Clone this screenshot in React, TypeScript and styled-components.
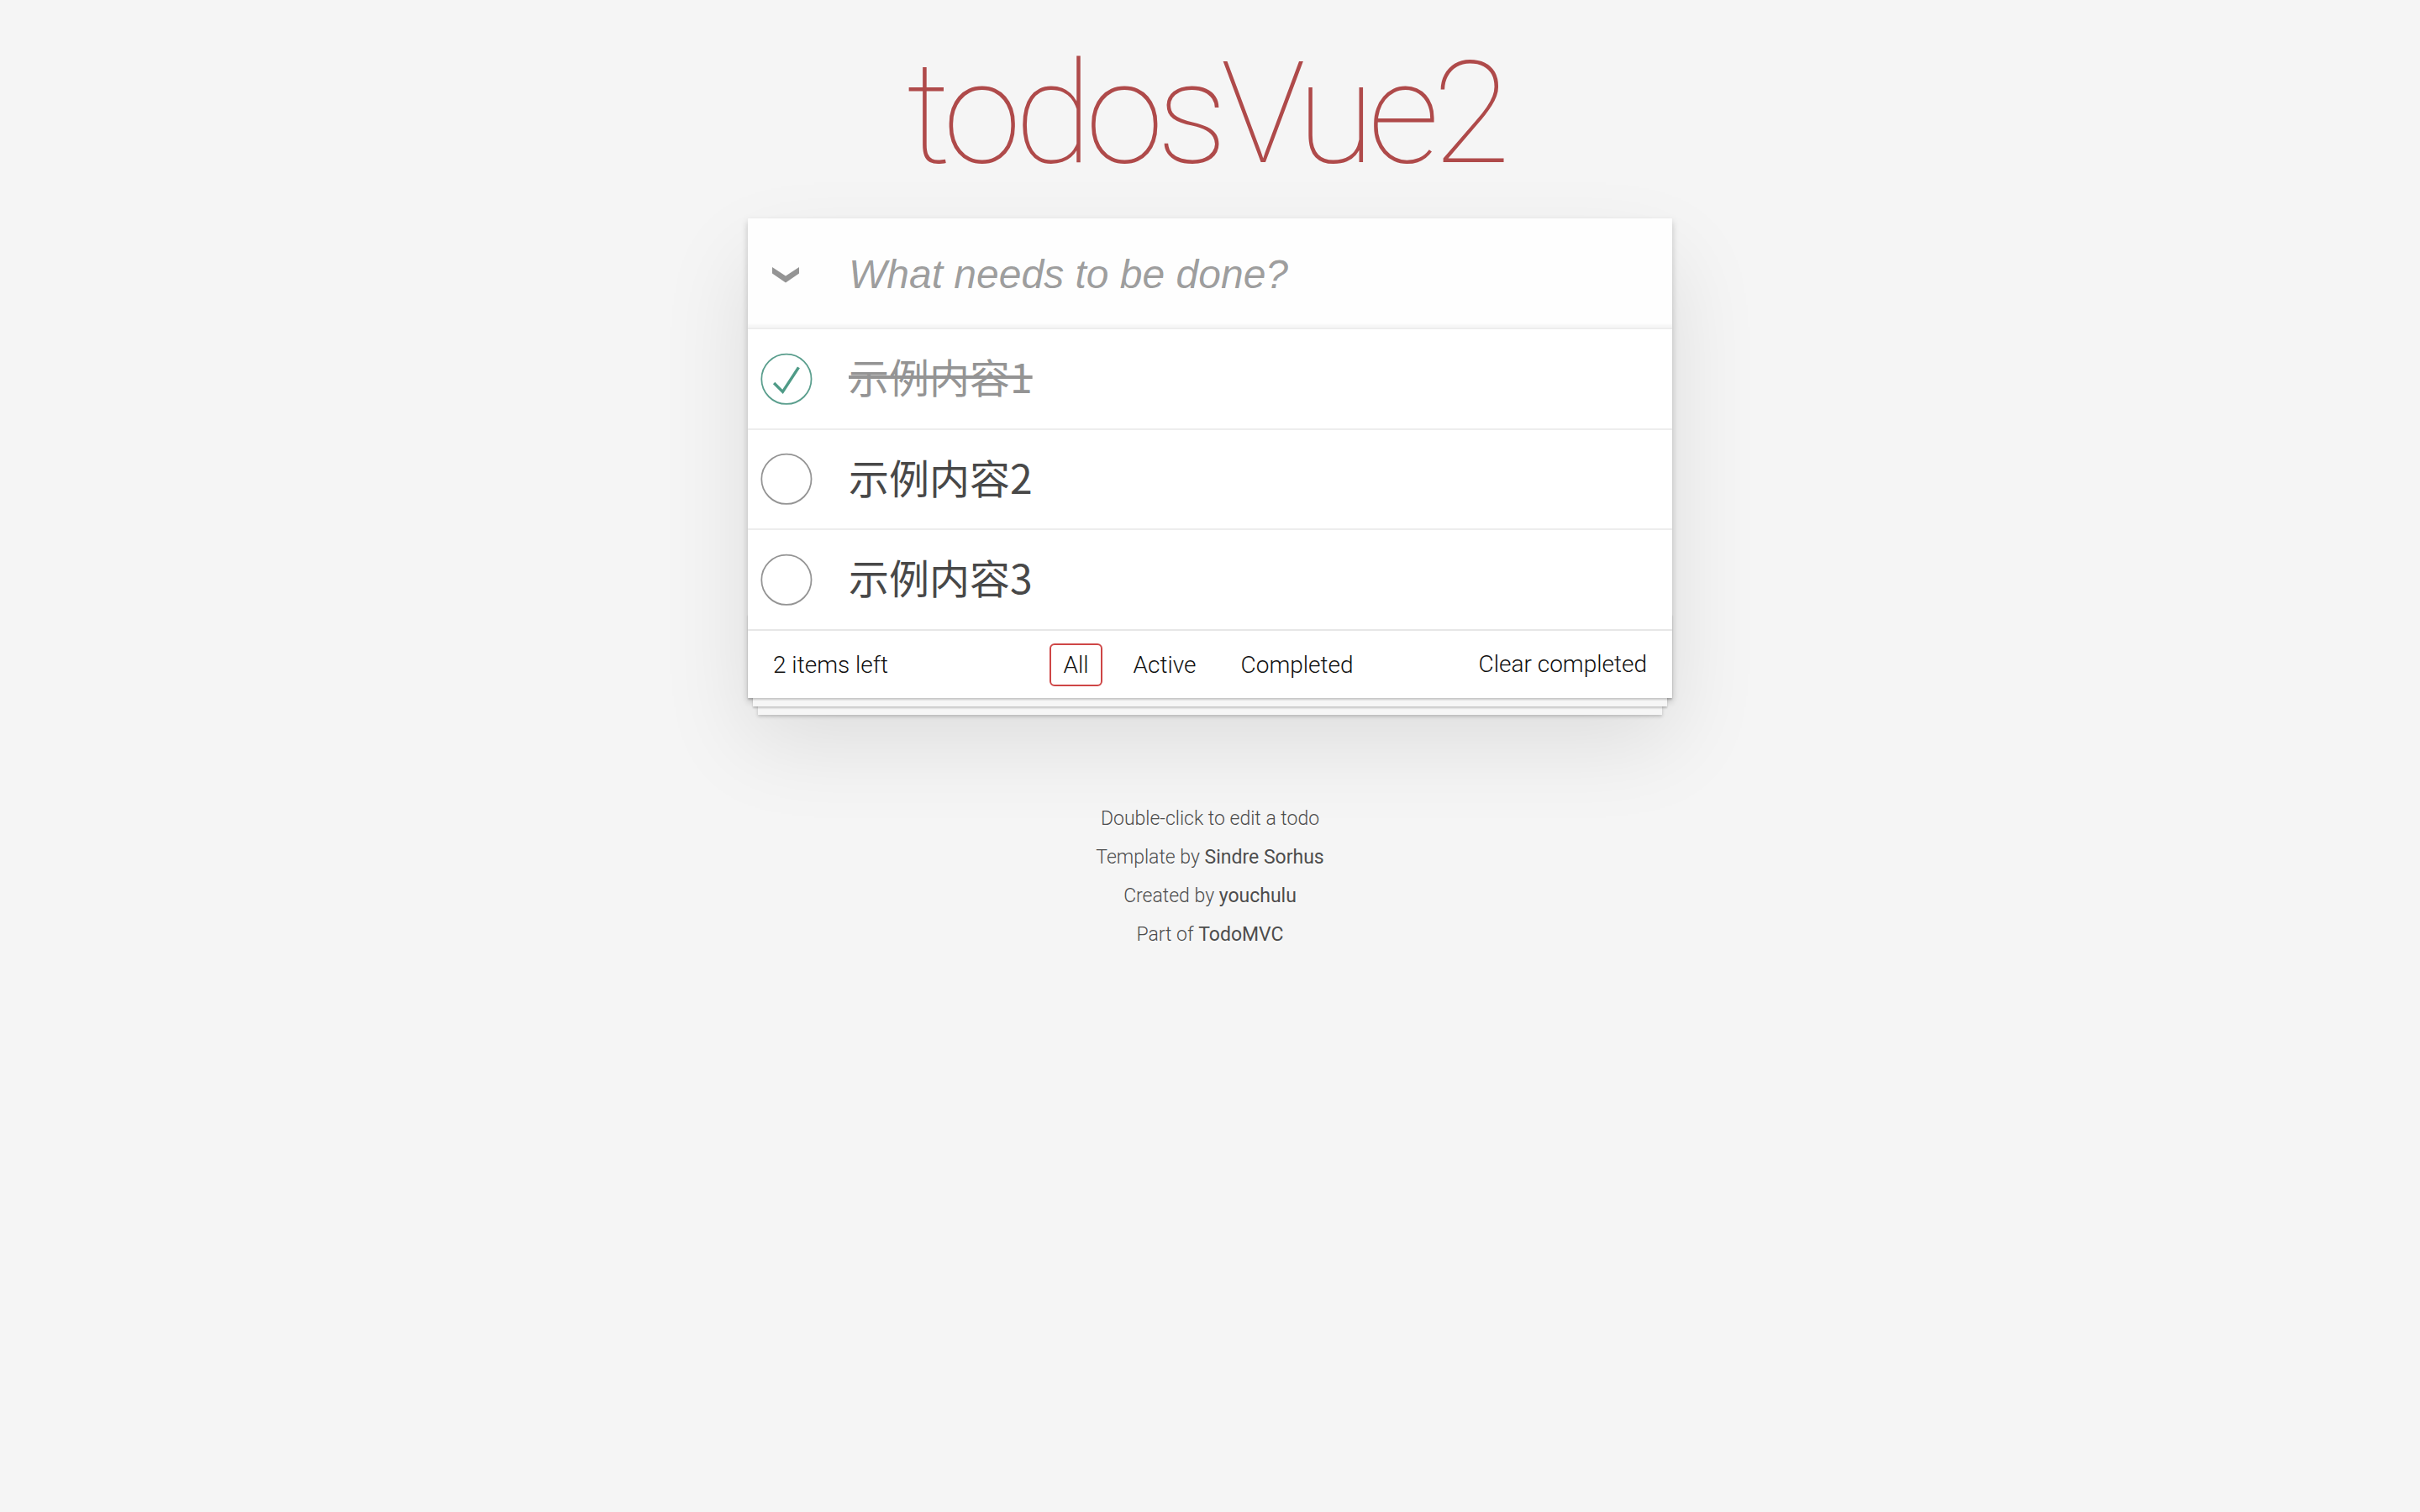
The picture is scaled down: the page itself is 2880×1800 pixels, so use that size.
import styled, { createGlobalStyle, css } from "styled-components";

const GlobalStyle = createGlobalStyle`
  html,
  body {
    margin: 0;
    padding: 0;
  }

  body {
    background: #f5f5f5;
    color: #111111;
    font-family: Roboto, "Noto Sans CJK SC", "Liberation Sans", sans-serif;
    font-weight: 300;
    -webkit-font-smoothing: antialiased;
  }
`;

const Page = styled.section`
  width: 1100px;
  margin: 0 auto;
`;

const Title = styled.h1`
  margin: 0 0 40px;
  padding: 51px 12px 0 0;
  font-size: 169px;
  line-height: 169px;
  font-weight: 100;
  letter-spacing: -8px;
  text-align: center;
  color: #af4a4a;
`;

const TodoApp = styled.div`
  position: relative;
  background: #fff;
  box-shadow: 0 4px 8px 0 rgba(0, 0, 0, 0.2), 0 50px 100px 0 rgba(0, 0, 0, 0.1);
`;

const Header = styled.header`
  display: flex;
  align-items: center;
  height: 130px;
  background: rgba(0, 0, 0, 0.003);
  box-shadow: inset 0 -4px 2px rgba(0, 0, 0, 0.03);
`;

const ToggleAll = styled.label`
  display: flex;
  align-items: center;
  justify-content: center;
  width: 90px;
  height: 130px;
  margin-top: 4px;
`;

const NewTodo = styled.input`
  flex: 1;
  height: 100%;
  border: none;
  outline: none;
  background: transparent;
  padding: 2px 32px 0 30px;
  font-family: "Liberation Sans", Arial, sans-serif;
  font-size: 48px;
  font-weight: 300;
  color: inherit;

  &::placeholder {
    font-style: italic;
    font-weight: 400;
    color: rgba(0, 0, 0, 0.4);
  }
`;

const TodoList = styled.ul`
  margin: 0;
  padding: 0;
  list-style: none;
`;

const TodoItem = styled.li`
  display: flex;
  align-items: center;
  border-top: 2px solid #ededed;
  font-size: 48px;
`;

const Toggle = styled.span`
  display: flex;
  width: 80px;
  height: 80px;
  flex: none;
`;

const TodoLabel = styled.label<{ $done?: boolean }>`
  flex: 1;
  padding: 27px 30px 33px 40px;
  line-height: 1.2;
  font-family: "Noto Sans CJK SC", Roboto, sans-serif;
  font-weight: 400;
  color: #484848;

  ${(p) =>
    p.$done &&
    css`
      color: #949494;
      text-decoration: line-through;
    `}
`;

const Footer = styled.footer`
  position: relative;
  display: grid;
  grid-template-columns: 1fr auto 1fr;
  align-items: center;
  height: 40px;
  padding: 15px 30px 25px;
  border-top: 2px solid #e6e6e6;
  font-size: 28px;
  line-height: 39px;

  &::before {
    content: "";
    position: absolute;
    right: 0;
    bottom: 0;
    left: 0;
    height: 100px;
    overflow: hidden;
    pointer-events: none;
    box-shadow: 0 2px 2px rgba(0, 0, 0, 0.2), 0 16px 0 -6px #f6f6f6,
      0 18px 2px -6px rgba(0, 0, 0, 0.2), 0 32px 0 -12px #f6f6f6,
      0 34px 4px -12px rgba(0, 0, 0, 0.2);
  }
`;

const Count = styled.span`
  justify-self: start;
`;

const Filters = styled.ul`
  display: flex;
  gap: 9px;
  margin: 0 4px 0 0;
  padding: 0;
  list-style: none;
`;

const FilterLink = styled.a<{ $selected?: boolean }>`
  display: block;
  margin: 0 6px;
  padding: 6px 14px;
  line-height: 35px;
  border: 2px solid ${(p) => (p.$selected ? "#ce4646" : "transparent")};
  border-radius: 6px;
  color: inherit;
  text-decoration: none;
`;

const ClearButton = styled.button`
  justify-self: end;
  margin: 0;
  padding: 0;
  border: none;
  background: none;
  font: inherit;
  color: inherit;
  line-height: 38px;
  cursor: pointer;
`;

const Info = styled.footer`
  margin-top: 132px;
  font-size: 23px;
  color: #4d4d4d;
  text-align: center;
  text-shadow: 0 2px 0 rgba(255, 255, 255, 0.5);

  p {
    margin: 22px 0;
    line-height: 24px;
  }

  p:first-child {
    margin-top: 0;
  }

  a {
    color: inherit;
    text-decoration: none;
    font-weight: 400;
  }
`;

const Chevron = () => (
  <svg width="32" height="20" viewBox="0 0 32 20">
    <polygon points="0,1 16,11.5 32,1 32,8.5 16,19.5 0,8.5" fill="#949494" />
  </svg>
);

const CheckCircle = ({ done }: { done: boolean }) => (
  <svg width="80" height="80" viewBox="-10 -18 100 135">
    <circle
      cx="50"
      cy="50"
      r="50"
      fill="none"
      stroke={done ? "#5a9e8d" : "#949494"}
      strokeWidth="3"
    />
    {done && <path fill="#4f9b87" d="M72 25L42 71 27 56l-4 4 20 20 34-52z" />}
  </svg>
);

const todos = [
  { title: "示例内容1", done: true },
  { title: "示例内容2", done: false },
  { title: "示例内容3", done: false },
];

export default function App() {
  const left = todos.filter((t) => !t.done).length;

  return (
    <>
      <GlobalStyle />
      <Page>
        <Title>todosVue2</Title>
        <TodoApp>
          <Header>
            <ToggleAll>
              <Chevron />
            </ToggleAll>
            <NewTodo placeholder="What needs to be done?" />
          </Header>
          <TodoList>
            {todos.map((todo) => (
              <TodoItem key={todo.title}>
                <Toggle>
                  <CheckCircle done={todo.done} />
                </Toggle>
                <TodoLabel $done={todo.done}>{todo.title}</TodoLabel>
              </TodoItem>
            ))}
          </TodoList>
          <Footer>
            <Count>{left} items left</Count>
            <Filters>
              <li>
                <FilterLink href="#/all" $selected>
                  All
                </FilterLink>
              </li>
              <li>
                <FilterLink href="#/active">Active</FilterLink>
              </li>
              <li>
                <FilterLink href="#/completed">Completed</FilterLink>
              </li>
            </Filters>
            <ClearButton>Clear completed</ClearButton>
          </Footer>
        </TodoApp>
        <Info>
          <p>Double-click to edit a todo</p>
          <p>
            Template by <a href="#">Sindre Sorhus</a>
          </p>
          <p>
            Created by <a href="#">youchulu</a>
          </p>
          <p>
            Part of <a href="#">TodoMVC</a>
          </p>
        </Info>
      </Page>
    </>
  );
}
